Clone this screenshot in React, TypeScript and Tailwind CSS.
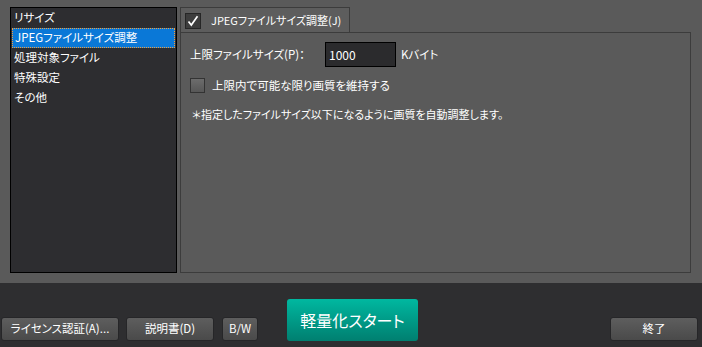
import React from 'react';

const font = { fontFamily: '"Noto Sans CJK JP", "Noto Sans", sans-serif' };

const menuItems = ['リサイズ', 'JPEGファイルサイズ調整', '処理対象ファイル', '特殊設定', 'その他'];

const GrayButton = ({ label, className }: { label: string; className: string }) => (
  <button
    type="button"
    className={`h-[24px] rounded-[3px] border border-[#262628] bg-gradient-to-b from-[#5e5e5e] to-[#4a4a4a] text-[11.5px] text-white leading-none whitespace-nowrap ${className}`}
  >
    {label}
  </button>
);

const App = () => {
  return (
    <div
      className="w-[702px] h-[347px] flex flex-col overflow-hidden whitespace-nowrap [font-feature-settings:'palt']"
      style={font}
    >
      {/* top area */}
      <div className="h-[283px] bg-[#5a5a5a] flex pl-[10px] pt-[7px] gap-[3px]">
        <div className="w-[167px] h-[266px] bg-[#2d2d30] border border-black px-[1px]">
          {menuItems.map((item, i) => (
            <div
              key={item}
              className={`h-[20px] flex items-center pl-[2px] text-[11.5px] text-white ${
                i === 1 ? 'bg-[#0a78d7] border border-dotted border-[#f0a040] pl-[1px]' : ''
              }`}
            >
              {item}
            </div>
          ))}
        </div>

        <div className="w-[511px] h-[266px] flex flex-col">
          <div className="flex">
            <div className="w-[170px] h-[26px] bg-[#5d5d5d] border border-b-0 border-[#3c3c3c] flex items-center pl-[4px] gap-[10px]">
              <div className="w-[16px] h-[16px] bg-[#3d3d3d] border border-[#262626] flex items-center justify-center">
                <svg width="12" height="12" viewBox="0 0 12 12">
                  <path d="M1.5 6.5 L4.3 10 L10.5 1.2" fill="none" stroke="white" strokeWidth="1.7" />
                </svg>
              </div>
              <span className="text-[11px] text-white">JPEGファイルサイズ調整(J)</span>
            </div>
          </div>
          <div className="flex-1 border border-[#3c3c3c] -mt-px pt-[9px] pl-[9px] flex flex-col">
            <div className="flex items-center h-[25px]">
              <span className="w-[135px] text-[11.5px] text-white">上限ファイルサイズ(P)：</span>
              <div className="w-[71px] h-[25px] bg-[#2b2b2d] border border-black flex items-center pl-[3px] text-[12px] text-white">
                1000
              </div>
              <span className="ml-[5px] text-[11.5px] text-white">Kバイト</span>
            </div>
            <div className="flex items-center mt-[10px] gap-[7px]">
              <div className="w-[15px] h-[15px] border border-[#333] bg-gradient-to-b from-[#6c6c6c] to-[#575757]" />
              <span className="text-[11.5px] text-white">上限内で可能な限り画質を維持する</span>
            </div>
            <div className="mt-[12px] pl-[2px] text-[11px] text-white">
              ＊指定したファイルサイズ以下になるように画質を自動調整します。
            </div>
          </div>
        </div>
      </div>

      {/* bottom bar */}
      <div className="flex-1 bg-[#2e2e30] flex items-end pb-[6px] pl-[1px] pr-[4px]">
        <GrayButton label="ライセンス認証(A)..." className="w-[118px]" />
        <GrayButton label="説明書(D)" className="w-[88px] ml-[7px]" />
        <GrayButton label="B/W" className="w-[36px] ml-[8px]" />
        <button
          type="button"
          className="w-[131px] h-[42px] ml-[29px] rounded-[3px] bg-gradient-to-b from-[#00b8a0] to-[#007f70] text-[16px] text-white"
        >
          軽量化スタート
        </button>
        <GrayButton label="終了" className="w-[88px] ml-auto" />
      </div>
    </div>
  );
};

export default App;
